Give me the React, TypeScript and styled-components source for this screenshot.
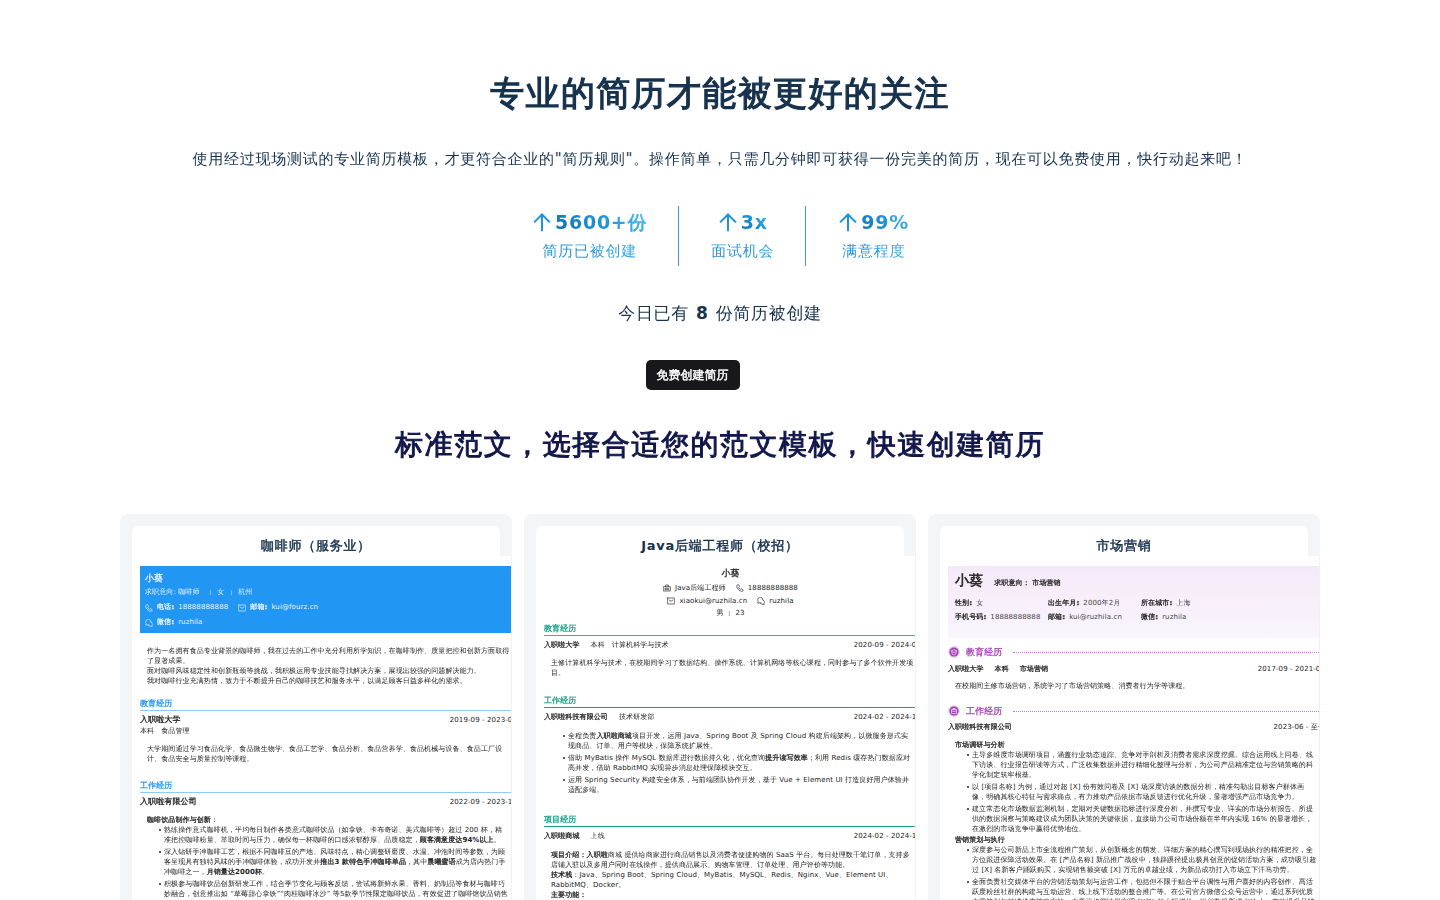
import React from 'react';
import styled, { createGlobalStyle, css } from 'styled-components';

const fontStack = '"DejaVu Sans", "WenQuanYi Zen Hei", "Noto Sans CJK SC", sans-serif';

/* The Chinese face has a single weight, so bold text is thickened with a thin outline. */
const hanBold = css`
  -webkit-text-stroke: 0.036em currentColor;
`;

const GlobalStyle = createGlobalStyle`
  * { box-sizing: border-box; }
  body {
    margin: 0;
    background: #fff;
    color: #17324d;
    font-family: ${fontStack};
    font-size: 15px;
    letter-spacing: 0.05em;
  }
  h1, h2, h3, h4, p, ul, dl, dd { margin: 0; padding: 0; }
  h1, h2, h3, h4, b, strong, dt { ${hanBold} }
`;

const Latin = styled.span`
  -webkit-text-stroke-width: 0;
`;

const Page = styled.main`
  max-width: 1200px;
  margin: 0 auto;
  padding-top: 67px;
`;

const Hero = styled.header`
  display: flex;
  flex-direction: column;
  align-items: center;
  text-align: center;
`;

const Title = styled.h1`
  font-size: 34px;
  line-height: 52px;
  letter-spacing: 0.04em;
  font-weight: 700;
`;

const Lead = styled.p`
  margin-top: 29px;
  font-size: 15px;
  line-height: 22px;
`;

const Stats = styled.div`
  display: flex;
  margin-top: 36px;
`;

const Stat = styled.div`
  padding: 3px 31px 2px 32px;
  height: 60px;
  text-align: center;
  & + & { border-left: 1px solid #4a96c4; }
`;

const StatValue = styled.div`
  display: flex;
  align-items: center;
  justify-content: center;
  gap: 3px;
  height: 26px;
  svg { width: 20px; height: 22px; }
  strong {
    color: transparent;
    background: linear-gradient(45deg, #0b6ea8, #1d93d8 50%, #55c0ee);
    -webkit-background-clip: text;
    background-clip: text;
    font-size: 19px;
    line-height: 26px;
  }
`;

const StatLabel = styled.div`
  background: linear-gradient(45deg, #1a86cc, #35a9e6);
  -webkit-background-clip: text;
  background-clip: text;
  color: transparent;
  line-height: 22px;
  margin-top: 5px;
`;

const Today = styled.p`
  margin-top: 34px;
  font-size: 17px;
  line-height: 26px;
  letter-spacing: 0.04em;
  strong { margin: 0 1px; -webkit-text-stroke-width: 0; }
`;

const Actions = styled.div`
  display: flex;
  justify-content: center;
  margin-top: 34px;
  padding-right: 55px;
`;

const CreateButton = styled.button`
  height: 30px;
  padding: 0 11px;
  border: 0;
  border-radius: 5px;
  background: #18181b;
  color: #fff;
  font: 700 12px/30px ${fontStack};
  cursor: pointer;
  ${hanBold}
`;

const SectionTitle = styled.h2`
  margin-top: 33px;
  color: #12174a;
  font-size: 28px;
  line-height: 44px;
  letter-spacing: 0.055em;
  text-align: center;
`;

const Cards = styled.section`
  display: grid;
  grid-template-columns: repeat(3, minmax(0, 1fr));
  gap: 12px;
  margin-top: 47px;
`;

const Card = styled.article`
  padding: 12px 0 0 12px;
  border-radius: 8px;
  background: #f3f5f6;
  overflow: hidden;
`;

const CardTitle = styled.h3`
  margin-right: 12px;
  height: 30px;
  padding-top: 9px;
  border-radius: 6px 6px 0 0;
  background: #fff;
  font-size: 13px;
  line-height: 22px;
  text-align: center;
`;

const Preview = styled.div`
  padding: 10px 0 40px 8px;
  border-right: 1px solid #eff1f3;
  background: #fff;
  overflow: hidden;
`;

const Resume = styled.div`
  width: calc(100% + 6px);
  color: #222;
  font-size: 7px;
  line-height: 10px;
  letter-spacing: 0.015em;
  white-space: nowrap;
  svg { flex: none; width: 8px; height: 8px; }
`;

const BlueHeader = styled.div`
  height: 67px;
  padding: 5px 5px 0;
  background: #2196f3;
  color: #e8f4ff;
  line-height: 15px;
`;

const Name = styled.h4<{ $size?: number }>`
  font-size: ${(p) => p.$size ?? 9}px;
  line-height: 14px;
`;

const Row = styled.div<{ $gap?: number; $center?: boolean; $h?: number }>`
  display: flex;
  align-items: center;
  justify-content: ${(p) => (p.$center ? 'center' : 'flex-start')};
  gap: ${(p) => p.$gap ?? 10}px;
  height: ${(p) => p.$h ?? 15}px;
`;

const NameRow = styled.div`
  display: flex;
  align-items: baseline;
  gap: 11px;
  height: 18px;
  line-height: 18px;
`;

const Bar = styled.span`
  font-size: 5px;
`;

const Item = styled.span`
  display: inline-flex;
  align-items: center;
  gap: 4px;
`;

const CenterHeader = styled.div`
  padding-right: 4px;
  text-align: center;
`;

const PinkHeader = styled.div`
  height: 72px;
  padding: 7px 7px 0;
  background: linear-gradient(#f4e9f8, #faf5fc);
`;

const Facts = styled.dl`
  display: grid;
  grid-template-columns: repeat(3, 93px);
  margin-top: 5px;
  line-height: 14px;
  color: #444;
  div { display: flex; gap: 4px; }
  dt { font-weight: 700; color: #222; }
`;

const Heading = styled.h4<{ $color: string; $line: string; $top: number }>`
  margin-top: ${(p) => p.$top}px;
  border-bottom: 1px solid ${(p) => p.$line};
  color: ${(p) => p.$color};
  font-size: 8px;
  line-height: 12px;
`;

const DottedHeading = styled.h4<{ $top: number }>`
  display: flex;
  align-items: center;
  gap: 6px;
  margin-top: ${(p) => p.$top}px;
  color: #ab47bc;
  font-size: 9px;
  line-height: 14px;
  &::after {
    content: "";
    flex: 1;
    margin-left: 5px;
    border-top: 1px dotted #cb74da;
  }
  svg { width: 12px; height: 12px; }
`;

const Entry = styled.div<{ $top?: number; $size?: number; $gap?: number }>`
  display: flex;
  align-items: center;
  gap: ${(p) => p.$gap ?? 11}px;
  margin-top: ${(p) => p.$top ?? 4}px;
  line-height: 10px;
  strong:first-child { font-size: ${(p) => p.$size ?? 7}px; }
  time { margin-left: auto; }
`;

const Text = styled.div<{ $top: number }>`
  margin: ${(p) => p.$top}px 0 0 7px;
  p { height: 10px; }
`;

const Bullets = styled.ul<{ $top?: number }>`
  display: grid;
  gap: 2px;
  margin: ${(p) => p.$top ?? 0}px 0 0 24px;
  list-style: none;
  li { position: relative; }
  li::before {
    content: "";
    position: absolute;
    left: -5px;
    top: 4px;
    width: 2px;
    height: 2px;
    border-radius: 50%;
    background: #222;
  }
  p { height: 10px; }
`;

const stroke = { fill: 'none', stroke: 'currentColor', strokeWidth: 2, strokeLinecap: 'round', strokeLinejoin: 'round' } as const;

const ArrowUp = () => (
  <svg viewBox="0 0 24 24" fill="none" stroke="#1b94d8" strokeWidth="2.4" aria-hidden="true">
    <path d="M12 23V3M2.500 12.500 12 3 21.500 12.500" />
  </svg>
);
const PhoneIcon = () => (
  <svg viewBox="0 0 24 24" {...stroke} aria-hidden="true">
    <path d="M6 2 2 5c0 9 8 17 17 17l3-4-6-4-3 2c-2-1-4-3-5-5l2-3z" />
  </svg>
);
const MailIcon = () => (
  <svg viewBox="0 0 24 24" {...stroke} aria-hidden="true">
    <rect x="1" y="3" width="22" height="18" rx="1" />
    <path d="m6 9 6 4 6-4" />
  </svg>
);
const ChatIcon = () => (
  <svg viewBox="0 0 24 24" {...stroke} aria-hidden="true">
    <path d="M12 18H2l2-4a8 8 0 1 1 14-5M18 9c5 3 5 7 3 10l1 3h-6c-3 0-4-2-5-4" />
  </svg>
);
const JobIcon = () => (
  <svg viewBox="0 0 24 24" {...stroke} aria-hidden="true">
    <path d="M2 8h20v13H2zM8 8V3h8v5M7 13h10v4H7z" />
  </svg>
);
const SchoolBadge = () => (
  <svg viewBox="0 0 24 24" aria-hidden="true">
    <circle cx="12" cy="12" r="11.5" fill="#e3c3ea" />
    <circle cx="12" cy="12" r="9" fill="#a03fb2" />
    <path d="m6 10 6-3 6 3-6 3zM8 12v4l4 2 4-2v-4" fill="none" stroke="#f0d9f5" strokeWidth="1.5" />
  </svg>
);
const WorkBadge = () => (
  <svg viewBox="0 0 24 24" aria-hidden="true">
    <circle cx="12" cy="12" r="11.5" fill="#e3c3ea" />
    <circle cx="12" cy="12" r="9" fill="#a03fb2" />
    <path d="M7 9h10v8H7zM7 12.500h10M10 9V7h4v2" fill="none" stroke="#f0d9f5" strokeWidth="1.5" />
  </svg>
);

type Lines = React.ReactNode[];
const Para = ({ top, lines }: { top: number; lines: Lines }) => (
  <Text $top={top}>{lines.map((l, i) => <p key={i}>{l}</p>)}</Text>
);
const List = ({ top, items }: { top?: number; items: Lines[] }) => (
  <Bullets $top={top}>
    {items.map((lines, i) => <li key={i}>{lines.map((l, j) => <p key={j}>{l}</p>)}</li>)}
  </Bullets>
);

const BaristaCard = () => (
  <Card>
    <CardTitle>咖啡师（服务业）</CardTitle>
    <Preview>
      <Resume>
        <BlueHeader>
          <Name>小葵</Name>
          <Row $gap={6}><span>求职意向: 咖啡师&nbsp;</span><Bar>&nbsp;|</Bar><span>女</span><Bar>|</Bar><span>杭州</span></Row>
          <Row>
            <Item><PhoneIcon /><b>电话:</b> 18888888888</Item>
            <Item><MailIcon /><b>邮箱:</b> kui@fourz.cn</Item>
          </Row>
          <Row><Item><ChatIcon /><b>微信:</b> ruzhila</Item></Row>
        </BlueHeader>
        <Para top={13} lines={[
          '作为一名拥有食品专业背景的咖啡师，我在过去的工作中充分利用所学知识，在咖啡制作、质量把控和创新方面取得',
          '了显著成果。',
          '面对咖啡风味稳定性和创新瓶颈等挑战，我积极运用专业技能寻找解决方案，展现出较强的问题解决能力。',
          '我对咖啡行业充满热情，致力于不断提升自己的咖啡技艺和服务水平，以满足顾客日益多样化的需求。',
        ]} />
        <Heading $color="#2196f3" $line="#90caf9" $top={12}>教育经历</Heading>
        <Entry $size={8}><strong>入职啦大学</strong><time>2019-09 - 2023-06</time></Entry>
        <Entry $top={1} $gap={7}><span>本科</span><span>食品管理</span></Entry>
        <Para top={8} lines={[
          '大学期间通过学习食品化学、食品微生物学、食品工艺学、食品分析、食品营养学、食品机械与设备、食品工厂设',
          '计、食品安全与质量控制等课程。',
        ]} />
        <Heading $color="#2196f3" $line="#90caf9" $top={16}>工作经历</Heading>
        <Entry $size={8}><strong>入职啦有限公司</strong><time>2022-09 - 2023-12</time></Entry>
        <Para top={8} lines={[<><b>咖啡饮品制作与创新</b>：</>]} />
        <List items={[
          ['熟练操作意式咖啡机，平均每日制作各类意式咖啡饮品（如拿铁、卡布奇诺、美式咖啡等）超过 200 杯，精',
            <>准把控咖啡粉量、萃取时间与压力，确保每一杯咖啡的口感浓郁醇厚、品质稳定，<b>顾客满意度达<Latin>94%</Latin>以上</b>。</>],
          ['深入钻研手冲咖啡工艺，根据不同咖啡豆的产地、风味特点，精心调整研磨度、水温、冲泡时间等参数，为顾',
            <>客呈现具有独特风味的手冲咖啡体验，成功开发并<b>推出<Latin>3</Latin> 款特色手冲咖啡单品</b>，其中<b>晨曦蜜语</b>成为店内热门手</>,
            <>冲咖啡之一，<b>月销量达<Latin>2000</Latin>杯</b>。</>],
          ['积极参与咖啡饮品创新研发工作，结合季节变化与顾客反馈，尝试将新鲜水果、香料、奶制品等食材与咖啡巧',
            '妙融合，创意推出如 “草莓甜心拿铁”“肉桂咖啡冰沙” 等5款季节性限定咖啡饮品，有效促进了咖啡馆饮品销售',
            <>额增长，新品推出期间销售额同期<b>提升了 <Latin>20%</Latin></b>。</>],
        ]} />
      </Resume>
    </Preview>
  </Card>
);

const JavaCard = () => (
  <Card>
    <CardTitle><Latin>Java</Latin>后端工程师（校招）</CardTitle>
    <Preview>
      <Resume>
        <CenterHeader>
          <Name>小葵</Name>
          <Row $center><Item><JobIcon />Java后端工程师</Item><Item><PhoneIcon />18888888888</Item></Row>
          <Row $center $h={12}><Item><MailIcon />xiaokui@ruzhila.cn</Item><Item><ChatIcon />ruzhila</Item></Row>
          <Row $center $gap={5} $h={12}><span>男</span><Bar>|</Bar><span>23</span></Row>
        </CenterHeader>
        <Heading $color="#16a085" $line="#3fae9b" $top={4}>教育经历</Heading>
        <Entry><strong>入职啦大学</strong><span>本科&emsp;计算机科学与技术</span><time>2020-09 - 2024-06</time></Entry>
        <Para top={8} lines={[
          '主修计算机科学与技术，在校期间学习了数据结构、操作系统、计算机网络等核心课程，同时参与了多个软件开发项',
          '目。',
        ]} />
        <Heading $color="#16a085" $line="#16a085" $top={17}>工作经历</Heading>
        <Entry><strong>入职啦科技有限公司</strong><span>技术研发部</span><time>2024-02 - 2024-12</time></Entry>
        <List top={9} items={[
          [<>全程负责<b>入职啦商城</b>项目开发，运用 Java、Spring Boot 及 Spring Cloud 构建后端架构，以微服务形式实</>,
            '现商品、订单、用户等模块，保障系统扩展性。'],
          [<>借助 MyBatis 操作 MySQL 数据库进行数据持久化，优化查询<b>提升读写效率</b>；利用 Redis 缓存热门数据应对</>,
            '高并发，借助 RabbitMQ 实现异步消息处理保障模块交互。'],
          ['运用 Spring Security 构建安全体系，与前端团队协作开发，基于 Vue + Element UI 打造良好用户体验并',
            '适配多端。'],
        ]} />
        <Heading $color="#16a085" $line="#16a085" $top={19}>项目经历</Heading>
        <Entry><strong>入职啦商城</strong><span>上线</span><time>2024-02 - 2024-12</time></Entry>
        <Para top={9} lines={[
          <><b>项目介绍：入职啦</b>商城 提供给商家进行商品销售以及消费者便捷购物的 SaaS 平台。每日处理数千笔订单，支持多</>,
          '店铺入驻以及多用户同时在线操作，提供商品展示、购物车管理、订单处理、用户评价等功能。',
          <><b>技术栈</b>：Java、Spring Boot、Spring Cloud、MyBatis、MySQL、Redis、Nginx、Vue、Element UI、</>,
          'RabbitMQ、Docker。',
          <b>主要功能：</b>,
        ]} />
      </Resume>
    </Preview>
  </Card>
);

const MarketingCard = () => (
  <Card>
    <CardTitle>市场营销</CardTitle>
    <Preview>
      <Resume>
        <PinkHeader>
          <NameRow><Name $size={14}>小葵</Name><b>求职意向： 市场营销</b></NameRow>
          <Facts>
            <div><dt>性别:</dt><dd>女</dd></div>
            <div><dt>出生年月:</dt><dd>2000年2月</dd></div>
            <div><dt>所在城市:</dt><dd>上海</dd></div>
            <div><dt>手机号码:</dt><dd>18888888888</dd></div>
            <div><dt>邮箱:</dt><dd>kui@ruzhila.cn</dd></div>
            <div><dt>微信:</dt><dd>ruzhila</dd></div>
          </Facts>
        </PinkHeader>
        <DottedHeading $top={7}><SchoolBadge />教育经历</DottedHeading>
        <Entry $top={5}><strong>入职啦大学</strong><b>本科</b><b>市场营销</b><time>2017-09 - 2021-06</time></Entry>
        <Para top={7} lines={['在校期间主修市场营销，系统学习了市场营销策略、消费者行为学等课程。']} />
        <DottedHeading $top={13}><WorkBadge />工作经历</DottedHeading>
        <Entry><strong>入职啦科技有限公司</strong><time>2023-06 - 至今</time></Entry>
        <Para top={8} lines={[<b>市场调研与分析</b>]} />
        <List items={[
          ['主导多维度市场调研项目，涵盖行业动态追踪、竞争对手剖析及消费者需求深度挖掘。综合运用线上问卷、线',
            '下访谈、行业报告研读等方式，广泛收集数据并进行精细化整理与分析，为公司产品精准定位与营销策略的科',
            '学化制定筑牢根基。'],
          ['以 [项目名称] 为例，通过对超 [X] 份有效问卷及 [X] 场深度访谈的数据分析，精准勾勒出目标客户群体画',
            '像，明确其核心特征与需求痛点，有力推动产品依据市场反馈进行优化升级，显著增强产品市场竞争力。'],
          ['建立常态化市场数据监测机制，定期对关键数据指标进行深度分析，并撰写专业、详实的市场分析报告。所提',
            '供的数据洞察与策略建议成为团队决策的关键依据，直接助力公司市场份额在半年内实现 16% 的显著增长，',
            '在激烈的市场竞争中赢得优势地位。'],
        ]} />
        <Para top={1} lines={[<b>营销策划与执行</b>]} />
        <List items={[
          ['深度参与公司新品上市全流程推广策划，从创新概念的萌发、详细方案的精心撰写到现场执行的精准把控，全',
            '方位跟进保障活动效果。在 [产品名称] 新品推广战役中，独辟蹊径提出极具创意的促销活动方案，成功吸引超',
            '过 [X] 名新客户踊跃购买，实现销售额突破 [X] 万元的卓越业绩，为新品成功打入市场立下汗马功劳。'],
          ['全面负责社交媒体平台的营销活动策划与运营工作，包括但不限于贴合平台调性与用户喜好的内容创作、高活',
            '跃度粉丝社群的构建与互动运营、线上线下活动的整合推广等。在公司官方微信公众号运营中，通过系列优质',
            '内容策划与精准推广策略实施，文章平均阅读量实现 [X]% 的大幅增长，粉丝数量新增 [X] 人，有效提升品牌'],
        ]} />
      </Resume>
    </Preview>
  </Card>
);

export default function App() {
  return (
    <>
      <GlobalStyle />
      <Page lang="zh-CN">
        <Hero>
          <Title>专业的简历才能被更好的关注</Title>
          <Lead>使用经过现场测试的专业简历模板，才更符合企业的"简历规则"。操作简单，只需几分钟即可获得一份完美的简历，现在可以免费使用，快行动起来吧！</Lead>
          <Stats>
            <Stat><StatValue><ArrowUp /><strong><Latin>5600+</Latin>份</strong></StatValue><StatLabel>简历已被创建</StatLabel></Stat>
            <Stat><StatValue><ArrowUp /><strong><Latin>3x</Latin></strong></StatValue><StatLabel>面试机会</StatLabel></Stat>
            <Stat><StatValue><ArrowUp /><strong><Latin>99%</Latin></strong></StatValue><StatLabel>满意程度</StatLabel></Stat>
          </Stats>
          <Today>今日已有 <strong>8</strong> 份简历被创建</Today>
          <Actions><CreateButton type="button">免费创建简历</CreateButton></Actions>
        </Hero>
        <SectionTitle>标准范文，选择合适您的范文模板，快速创建简历</SectionTitle>
        <Cards>
          <BaristaCard />
          <JavaCard />
          <MarketingCard />
        </Cards>
      </Page>
    </>
  );
}
